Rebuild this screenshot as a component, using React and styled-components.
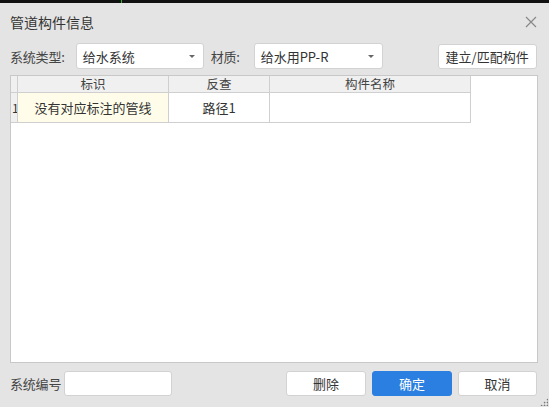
import styled, { createGlobalStyle } from 'styled-components';

const GlobalStyle = createGlobalStyle`
	html, body {
		margin: 0;
		padding: 0;
		background: #e4e4e4;
		font-family: 'Noto Sans CJK SC', 'Noto Sans', sans-serif;
		color: #333;
	}
`;

const Dialog = styled.div`
	width: 549px;
	height: 407px;
	display: flex;
	flex-direction: column;
	background: #e4e4e4;
	position: relative;
	overflow: hidden;
`;

const TopEdge = styled.div`
	height: 3px;
	background: #111;
	position: relative;
	&::after {
		content: '';
		position: absolute;
		left: 121px;
		top: 0;
		width: 1px;
		height: 3px;
		background: #2bb52b;
	}
`;

const TitleBar = styled.div`
	height: 38px;
	display: flex;
	align-items: center;
	padding: 0 12px 0 10px;
`;

const Title = styled.div`
	font-size: 14px;
	color: #333;
`;

const Close = styled.div`
	margin-left: auto;
	width: 12px;
	height: 12px;
	display: flex;
`;

const Toolbar = styled.div`
	display: flex;
	align-items: center;
	height: 26px;
	margin-top: 2px;
	padding: 0 12px 0 10px;
`;

const Label = styled.span`
	font-size: 13px;
	color: #444;
	margin-right: ${(p) => p.gap || 0}px;
	white-space: nowrap;
	letter-spacing: -0.2px;
`;

const Select = styled.div`
	width: ${(p) => p.w}px;
	height: 26px;
	box-sizing: border-box;
	background: #fff;
	border: 1px solid #d2d2d2;
	border-radius: 3px;
	display: flex;
	align-items: center;
	padding: 0 8px 0 6px;
	font-size: 13px;
	color: #333;
	margin-right: ${(p) => p.mr || 0}px;
	&::after {
		content: '';
		margin-left: auto;
		border-left: 3px solid transparent;
		border-right: 3px solid transparent;
		border-top: 3px solid #666;
	}
`;

const Button = styled.button`
	width: ${(p) => p.w}px;
	height: 25px;
	box-sizing: border-box;
	border-radius: 3px;
	border: 1px solid ${(p) => (p.primary ? '#2b7fe0' : '#d2d2d2')};
	background: ${(p) => (p.primary ? '#2b7fe0' : '#fff')};
	color: ${(p) => (p.primary ? '#fff' : '#333')};
	font-family: inherit;
	font-size: 13px;
	padding: 0;
	margin-left: ${(p) => p.ml || 0}px;
	cursor: pointer;
`;

const TableBox = styled.div`
	margin: 6px 11px 0 10px;
	height: 288px;
	box-sizing: border-box;
	background: #fff;
	border: 1px solid #c8c8c8;
`;

const Grid = styled.div`
	display: grid;
	grid-template-columns: 7px 151px 101px 201px;
	grid-template-rows: 17px 30px;
	width: max-content;
`;

const HeadCell = styled.div`
	background: #f0f0f0;
	border-right: 1px solid #cfcfcf;
	border-bottom: 1px solid #cfcfcf;
	font-size: 12.5px;
	line-height: 16px;
	display: flex;
	align-items: center;
	justify-content: center;
	color: #444;
`;

const Cell = styled.div`
	background: ${(p) => (p.active ? '#fffdea' : '#fff')};
	border-right: 1px solid #cfcfcf;
	border-bottom: 1px solid #cfcfcf;
	font-size: 13px;
	display: flex;
	align-items: center;
	justify-content: center;
	color: #333;
	overflow: hidden;
`;

const RowNum = styled(Cell)`
	background: #f0f0f0;
	justify-content: flex-start;
	font-size: 12px;
	padding-left: 1px;
`;

const Footer = styled.div`
	display: flex;
	align-items: center;
	height: 25px;
	margin-top: 8px;
	padding: 0 12px 0 10px;
`;

const Input = styled.div`
	width: 108px;
	height: 25px;
	box-sizing: border-box;
	background: #fff;
	border: 1px solid #d2d2d2;
	border-radius: 3px;
	margin-right: auto;
`;

const Grip = styled.div`
	position: absolute;
	right: 1px;
	bottom: 1px;
	width: 8px;
	height: 8px;
	background-image: radial-gradient(circle, #777 0.8px, transparent 1.1px);
	background-size: 3px 3px;
	clip-path: polygon(100% 0, 100% 100%, 0 100%);
`;

export default function App() {
	return (
		<Dialog>
			<GlobalStyle />
			<TopEdge />
			<TitleBar>
				<Title>管道构件信息</Title>
				<Close>
					<svg width='12' height='12' viewBox='0 0 12 12'>
						<path d='M1 1L11 11M11 1L1 11' stroke='#888' strokeWidth='1.2' />
					</svg>
				</Close>
			</TitleBar>
			<Toolbar>
				<Label gap={11}>系统类型:</Label>
				<Select w={128} mr={7}>给水系统</Select>
				<Label gap={14}>材质:</Label>
				<Select w={129}>给水用PP-R</Select>
				<Button w={99} ml={55}>建立/匹配构件</Button>
			</Toolbar>
			<TableBox>
				<Grid>
					<HeadCell />
					<HeadCell>标识</HeadCell>
					<HeadCell>反查</HeadCell>
					<HeadCell>构件名称</HeadCell>
					<RowNum>1</RowNum>
					<Cell active>没有对应标注的管线</Cell>
					<Cell>路径1</Cell>
					<Cell />
				</Grid>
			</TableBox>
			<Footer>
				<Label gap={3}>系统编号</Label>
				<Input />
				<Button w={80}>删除</Button>
				<Button w={80} ml={6} primary>确定</Button>
				<Button w={79} ml={6}>取消</Button>
			</Footer>
			<Grip />
		</Dialog>
	);
}
